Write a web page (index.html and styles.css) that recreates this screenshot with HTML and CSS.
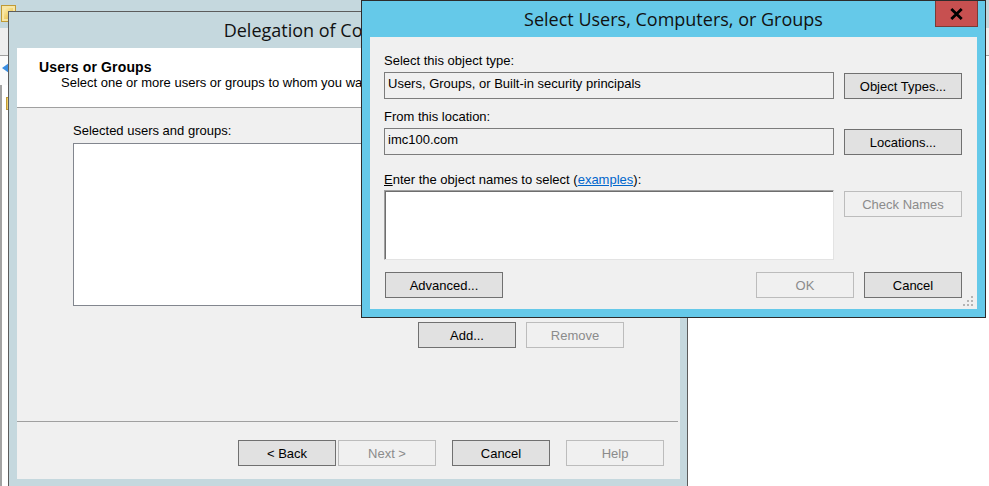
FILE: index.html
```html
<!DOCTYPE html>
<html lang="en">
<head>
<meta charset="utf-8">
<title>Select Users, Computers, or Groups</title>
<link rel="stylesheet" href="styles.css">
</head>
<body>
<div class="desktop">
  <div class="mmc">
    <div class="mmc-title"><span class="mmc-icon"></span></div>
    <div class="mmc-menu"></div>
    <div class="mmc-toolbar"><span class="nav-back"></span></div>
    <div class="mmc-body">
      <div class="mmc-tree"><span class="tree-icon"></span></div>
      <div class="mmc-pane"></div>
    </div>
  </div>

  <section class="window wizard">
    <header class="titlebar">
      <h1 class="title">Delegation of Control Wizard</h1>
    </header>
    <div class="client wizard-client">
      <div class="wiz-header">
        <h2 class="wiz-heading">Users or Groups</h2>
        <p class="wiz-sub">Select one or more users or groups to whom you want to delegate control.</p>
      </div>
      <div class="wiz-body">
        <div class="label">Selected users and groups:</div>
        <div class="listbox"></div>
        <div class="wiz-actions">
          <button class="btn">Add...</button>
          <button class="btn" disabled>Remove</button>
        </div>
      </div>
      <div class="wiz-footer">
        <button class="btn">&lt; Back</button>
        <button class="btn next" disabled>Next &gt;</button>
        <button class="btn gap">Cancel</button>
        <button class="btn gap" disabled>Help</button>
      </div>
    </div>
  </section>

  <section class="window picker">
    <header class="titlebar picker-titlebar">
      <span class="tb-spacer"></span>
      <h1 class="title">Select Users, Computers, or Groups</h1>
      <button class="close" aria-label="Close">
        <svg width="13" height="12" viewBox="0 0 13 12"><path d="M1.3 1 L11.7 11 M11.7 1 L1.3 11" stroke="#000" stroke-width="2.8" fill="none"/></svg>
      </button>
    </header>
    <div class="client picker-client">
      <div class="label">Select this object type:</div>
      <div class="row row-first">
        <div class="readonly">Users, Groups, or Built-in security principals</div>
        <button class="btn side">Object Types...</button>
      </div>
      <div class="label label-second">From this location:</div>
      <div class="row row-first">
        <div class="readonly">imc100.com</div>
        <button class="btn side">Locations...</button>
      </div>
      <div class="label label-third"><u>E</u>nter the object names to select (<a class="link" href="#">examples</a>):</div>
      <div class="row row-names">
        <div class="names"></div>
        <button class="btn side" disabled>Check Names</button>
      </div>
      <div class="row row-buttons">
        <button class="btn advanced">Advanced...</button>
        <div class="btn-group">
          <button class="btn" disabled>OK</button>
          <button class="btn">Cancel</button>
        </div>
      </div>
      <svg class="grip" width="12" height="12" viewBox="0 0 12 12">
        <rect x="9" y="1" width="2" height="2" fill="#b4b4b4"/>
        <rect x="5" y="5" width="2" height="2" fill="#b4b4b4"/>
        <rect x="9" y="5" width="2" height="2" fill="#b4b4b4"/>
        <rect x="1" y="9" width="2" height="2" fill="#b4b4b4"/>
        <rect x="5" y="9" width="2" height="2" fill="#b4b4b4"/>
        <rect x="9" y="9" width="2" height="2" fill="#b4b4b4"/>
      </svg>
    </div>
  </section>
</div>
</body>
</html>
```

FILE: styles.css
```css
* { box-sizing: border-box; }

html, body {
  margin: 0;
  padding: 0;
}

body {
  width: 989px;
  height: 486px;
  overflow: hidden;
  background: #ffffff;
  font-family: "Liberation Sans", Arial, sans-serif;
  font-size: 13px;
  color: #000;
}

.desktop {
  position: relative;
  width: 989px;
  height: 486px;
  overflow: hidden;
}

/* background console */
.mmc {
  display: flex;
  flex-direction: column;
  height: 486px;
}
.mmc-title {
  height: 28px;
  background: #c5d8de;
  padding: 5px 0 0 1px;
}
.mmc-icon {
  display: block;
  width: 15px;
  height: 17px;
  border: 1px solid #c09a35;
  background: linear-gradient(135deg, #fff7cf 0%, #f3d77a 45%, #d9ad3e 100%);
  box-shadow: inset 0 0 0 2px #f7e6a5;
}
.mmc-menu {
  height: 28px;
  background: #eeeeee;
  border-bottom: 1px solid #a0a0a0;
}
.mmc-toolbar {
  height: 29px;
  background: #fbfbfb;
  padding: 7px 0 0 2px;
}
.nav-back {
  display: block;
  width: 0;
  height: 0;
  border-right: 7px solid #3a8ee2;
  border-top: 5px solid transparent;
  border-bottom: 5px solid transparent;
}
.mmc-body {
  flex: 1;
  display: flex;
}
.mmc-tree {
  width: 400px;
  border-left: 2px solid #a3a3a3;
  background: #ffffff;
  padding: 12px 0 0 4px;
}
.tree-icon {
  display: block;
  width: 12px;
  height: 13px;
  border: 1px solid #c09a35;
  background: #f0cf6a;
}
.mmc-pane {
  flex: 1;
  background: #ffffff;
}

/* windows */
.window {
  position: absolute;
  display: flex;
  flex-direction: column;
}
.titlebar {
  height: 36px;
  padding-top: 6px;
  text-align: center;
}
.title {
  margin: 0;
  font-family: "Open Sans", "Noto Sans", sans-serif;
  font-weight: 400;
  font-size: 18px;
  line-height: 24px;
  color: #111;
  white-space: nowrap;
}
.client {
  background: #f0f0f0;
}

/* wizard */
.wizard {
  left: 8px;
  top: 11px;
  width: 680px;
  height: 490px;
  border: 1px solid #5c5c5c;
  background: #c5d8de;
  padding: 0 7px 0 8px;
}
.wizard .titlebar {
  overflow: hidden;
  padding-right: 8px;
}
.wizard-client {
  height: 431px;
  display: flex;
  flex-direction: column;
}
.wiz-header {
  height: 60px;
  background: #ffffff;
  border-bottom: 1px solid #a0a0a0;
  padding: 12px 0 0 22px;
  white-space: nowrap;
  overflow: hidden;
}
.wiz-heading {
  margin: 0;
  font-size: 14px;
  font-weight: 700;
  line-height: 15px;
  letter-spacing: 0.15px;
}
.wiz-sub {
  margin: 0;
  padding-left: 22px;
  line-height: 15px;
}
.wiz-body {
  flex: 1;
  padding: 15px 0 0 56px;
}
.label {
  line-height: 15px;
  white-space: nowrap;
}
.listbox {
  margin-top: 5px;
  width: 551px;
  height: 163px;
  background: #ffffff;
  border: 1px solid #82868e;
}
.wiz-actions {
  width: 551px;
  margin-top: 16px;
  display: flex;
  justify-content: flex-end;
  gap: 10px;
}
.wiz-footer {
  height: 58px;
  margin-right: 2px;
  border-top: 1px solid #a0a0a0;
  display: flex;
  justify-content: flex-end;
  padding: 18px 14px 0 0;
}
.wiz-footer .next { margin-left: 2px; }
.wiz-footer .gap { margin-left: 16px; }

/* buttons */
.btn {
  font: inherit;
  font-size: 13px;
  line-height: 15px;
  color: #000;
  width: 98px;
  height: 26px;
  padding: 0;
  margin: 0;
  background: #e1e1e1;
  border: 1px solid #707070;
  white-space: nowrap;
}
.btn:disabled {
  color: #8b8b8b;
  background: #f0f0f0;
  border-color: #bcbcbc;
}

/* picker dialog */
.picker {
  left: 361px;
  top: 0;
  width: 625px;
  height: 318px;
  border: 1px solid #2c2c2c;
  background: #65c9e9;
  padding: 0 8px 8px 8px;
}
.picker-titlebar {
  display: grid;
  grid-template-columns: 1fr auto 1fr;
  margin: 0 -8px;
  padding: 0;
}
.picker-titlebar .title {
  padding-top: 6px;
}
.close {
  justify-self: end;
  align-self: start;
  width: 43px;
  height: 26px;
  margin: 0 7px 0 0;
  padding: 0;
  background: #c75050;
  border: 1px solid #7a3b36;
  border-top: none;
  display: flex;
  align-items: center;
  justify-content: center;
}
.close svg { display: block; margin-top: 1px; }

.picker-client {
  position: relative;
  height: 272px;
  padding: 16px 15px 0 14px;
}
.row {
  display: flex;
  gap: 10px;
  align-items: flex-start;
}
.row-first { margin-top: 4px; }
.label-second { margin-top: 10px; }
.label-third { margin-top: 17px; }
.row-names { margin-top: 3px; }
.row-buttons {
  margin-top: 12px;
  justify-content: space-between;
}
.readonly {
  width: 450px;
  height: 27px;
  border: 1px solid #7c7c7c;
  background: #f0f0f0;
  padding: 3px 0 0 3px;
  line-height: 15px;
  white-space: nowrap;
}
.btn.side {
  width: 118px;
  margin-top: 1px;
}
.names {
  width: 450px;
  height: 70px;
  background: #ffffff;
  border: 1px solid;
  border-color: #a0a0a0 #e3e3e3 #e3e3e3 #a0a0a0;
  box-shadow: inset 1px 1px 0 #6e6e6e;
}
.btn.advanced {
  width: 118px;
  margin-left: 1px;
}
.btn-group {
  display: flex;
  gap: 10px;
}
.link {
  color: #0066cc;
  text-decoration: underline;
}
.grip {
  position: absolute;
  right: 3px;
  bottom: 2px;
  display: block;
}
```
